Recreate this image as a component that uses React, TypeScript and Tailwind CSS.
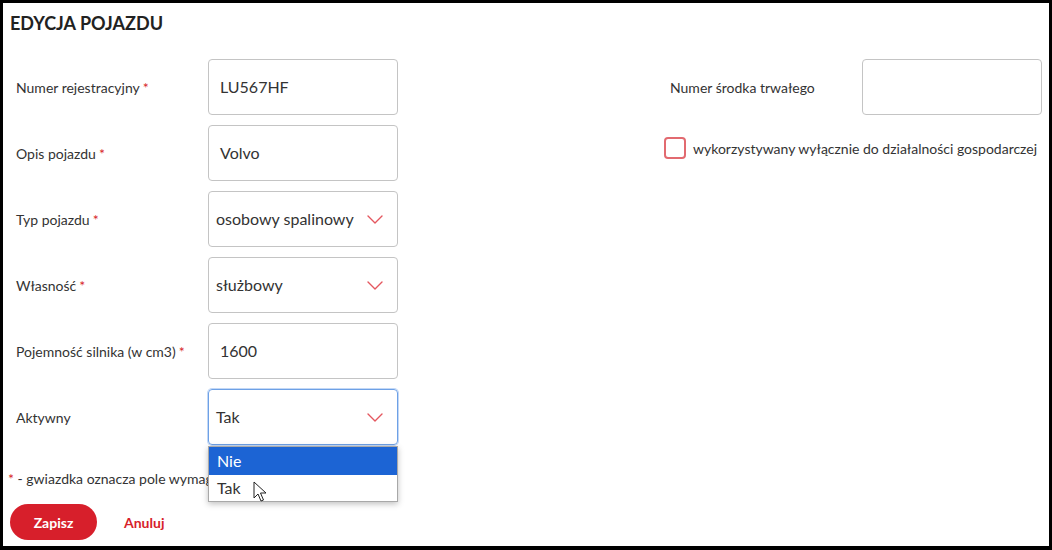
import React from 'react';

const font = { fontFamily: 'Lato, "Noto Sans", sans-serif' };

function Chevron() {
  return (
    <svg width="16" height="9" viewBox="0 0 16 9" className="shrink-0">
      <path d="M1 1 L8 8 L15 1" fill="none" stroke="#e4575f" strokeWidth="1.4" strokeLinecap="round" strokeLinejoin="round" />
    </svg>
  );
}

function Label({ text, required }: { text: string; required?: boolean }) {
  return (
    <div className="w-[192px] shrink-0 text-[14px] text-[#333]">
      {text}
      {required && <span className="text-[#d71f2b] ml-[3px]">*</span>}
    </div>
  );
}

function TextField({ value }: { value: string }) {
  return (
    <div className="w-[190px] h-[56px] border border-[#c4c4c4] rounded-[4px] flex items-center pl-[11px] text-[16px] text-[#333]">
      {value}
    </div>
  );
}

function SelectField({ value, focused }: { value: string; focused?: boolean }) {
  return (
    <div
      className={
        focused
          ? 'w-[190px] h-[56px] border border-[#6ea1e6] ring-1 ring-[#c3d8f6] rounded-[4px] flex items-center justify-between pl-[7px] pr-[14px] text-[16px] text-[#333]'
          : 'w-[190px] h-[56px] border border-[#c4c4c4] rounded-[4px] flex items-center justify-between pl-[7px] pr-[14px] text-[16px] text-[#333]'
      }
    >
      <span>{value}</span>
      <Chevron />
    </div>
  );
}

function Cursor() {
  return (
    <svg width="15" height="22" viewBox="0 0 15 22" className="absolute left-[44px] top-[34px]">
      <path
        d="M1 1 L1 17 L5 13 L8 20 L10.5 19 L7.5 12 L13 12 Z"
        fill="#fff"
        stroke="#222"
        strokeWidth="1"
        strokeLinejoin="round"
      />
    </svg>
  );
}

export default function App() {
  return (
    <div style={font} className="w-[1052px] h-[550px] border-[3px] border-b-[4px] border-black bg-white overflow-hidden">
      <h1 className="pl-[7px] mt-[8px] h-[24px] leading-[24px] text-[18px] font-bold text-[#222]">EDYCJA POJAZDU</h1>

      <div className="flex mt-[24px]">
        {/* lewa kolumna */}
        <div className="w-[661px] shrink-0 pl-[13px]">
          <div className="flex flex-col gap-[10px]">
            <div className="flex items-center">
              <Label text="Numer rejestracyjny" required />
              <TextField value="LU567HF" />
            </div>
            <div className="flex items-center">
              <Label text="Opis pojazdu" required />
              <TextField value="Volvo" />
            </div>
            <div className="flex items-center">
              <Label text="Typ pojazdu" required />
              <SelectField value="osobowy spalinowy" />
            </div>
            <div className="flex items-center">
              <Label text="Własność" required />
              <SelectField value="służbowy" />
            </div>
            <div className="flex items-center">
              <Label text="Pojemność silnika (w cm3)" required />
              <TextField value="1600" />
            </div>
            <div className="flex items-center">
              <Label text="Aktywny" />
              <div className="relative">
                <SelectField value="Tak" focused />
                {/* otwarta lista wyboru */}
                <div className="absolute left-0 top-[57px] w-[190px] z-10 bg-white border border-[#a8a8a8] shadow-[0_2px_6px_rgba(0,0,0,0.25)] text-[16px]">
                  <div className="h-[28px] bg-[#1c64d4] text-white flex items-center pl-[8px]">Nie</div>
                  <div className="h-[26px] text-[#333] flex items-center pl-[8px]">Tak</div>
                  <Cursor />
                </div>
              </div>
            </div>
          </div>

          <div className="-ml-[8px] mt-[23px] text-[14px] text-[#333] whitespace-nowrap">
            <span className="text-[#d71f2b]">*</span> - gwiazdka oznacza pole wymagane
          </div>

          <div className="-ml-[6px] mt-[15px] flex items-center gap-[27px]">
            <button className="w-[87px] h-[36px] rounded-full bg-[#d71f2b] text-white text-[14px] font-bold">Zapisz</button>
            <button className="text-[#d71f2b] text-[14px] font-bold">Anuluj</button>
          </div>
        </div>

        {/* prawa kolumna */}
        <div className="flex flex-col">
          <div className="flex items-center">
            <div className="w-[198px] shrink-0 pl-[6px] text-[14px] text-[#333]">Numer środka trwałego</div>
            <div className="w-[180px] h-[56px] border border-[#c4c4c4] rounded-[4px]" />
          </div>
          <div className="flex items-center mt-[22px] gap-[7px]">
            <div className="w-[22px] h-[22px] border-2 border-[#e26a70] rounded-[4px] shrink-0" />
            <span className="text-[14px] text-[#333] whitespace-nowrap">wykorzystywany wyłącznie do działalności gospodarczej</span>
          </div>
        </div>
      </div>
    </div>
  );
}
